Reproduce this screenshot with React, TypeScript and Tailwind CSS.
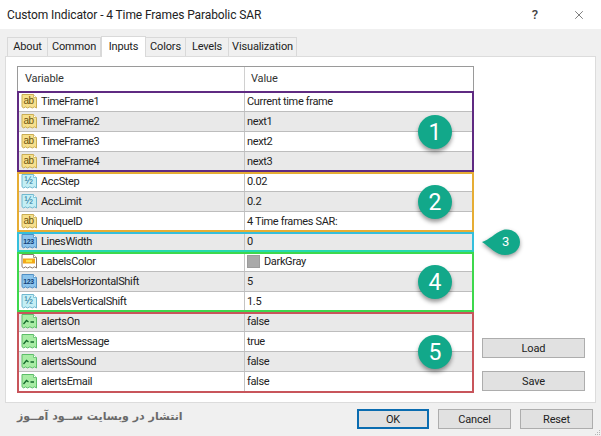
import React from 'react';
import { X } from 'lucide-react';

type IconKind = 'ab' | 'half' | 'num' | 'color' | 'bool';

interface Param {
  name: string;
  value: string;
  icon: IconKind;
}

const groups: { rows: Param[]; frame: string; badge?: string; className: string }[] = [
  {
    frame: 'border-[#5f2a82] -top-px bottom-0',
    badge: '1',
    className: 'h-[80px]',
    rows: [
      { name: 'TimeFrame1', value: 'Current time frame', icon: 'ab' },
      { name: 'TimeFrame2', value: 'next1', icon: 'ab' },
      { name: 'TimeFrame3', value: 'next2', icon: 'ab' },
      { name: 'TimeFrame4', value: 'next3', icon: 'ab' },
    ],
  },
  {
    frame: 'border-[#e6ad34] top-0 bottom-0',
    badge: '2',
    className: 'h-[60px]',
    rows: [
      { name: 'AccStep', value: '0.02', icon: 'half' },
      { name: 'AccLimit', value: '0.2', icon: 'half' },
      { name: 'UniqueID', value: '4 Time frames SAR:', icon: 'ab' },
    ],
  },
  {
    frame: 'border-[#35bfdc] border-b-[#26d8b0] top-0 bottom-0',
    className: 'h-[20px]',
    rows: [{ name: 'LinesWidth', value: '0', icon: 'num' }],
  },
  {
    frame: 'border-[#3ed84c] top-0 bottom-0',
    badge: '4',
    className: 'h-[60px]',
    rows: [
      { name: 'LabelsColor', value: 'DarkGray', icon: 'color' },
      { name: 'LabelsHorizontalShift', value: '5', icon: 'num' },
      { name: 'LabelsVerticalShift', value: '1.5', icon: 'half' },
    ],
  },
  {
    frame: 'border-[#c8555b] top-0 -bottom-px',
    badge: '5',
    className: 'h-[80px]',
    rows: [
      { name: 'alertsOn', value: 'false', icon: 'bool' },
      { name: 'alertsMessage', value: 'true', icon: 'bool' },
      { name: 'alertsSound', value: 'false', icon: 'bool' },
      { name: 'alertsEmail', value: 'false', icon: 'bool' },
    ],
  },
];

const tabs = [
  { label: 'About', w: 'w-[41px]' },
  { label: 'Common', w: 'w-[53px]' },
  { label: 'Inputs', w: 'w-[45px]' },
  { label: 'Colors', w: 'w-[40px]' },
  { label: 'Levels', w: 'w-[43px]' },
  { label: 'Visualization', w: 'w-[68px]' },
];

const iconColors: Record<IconKind, { fill: string; stroke: string; text: string }> = {
  ab: { fill: '#f7e08c', stroke: '#c9ad52', text: '#6b5410' },
  half: { fill: '#c4eef4', stroke: '#6fb9d0', text: '#1c6f96' },
  num: { fill: '#8cc4ec', stroke: '#4f8fc4', text: '#123f78' },
  color: { fill: '#ffffff', stroke: '#8a7a6a', text: '' },
  bool: { fill: '#a8eca4', stroke: '#5cbe68', text: '#14682c' },
};

function ParamIcon({ kind }: { kind: IconKind }) {
  const c = iconColors[kind];
  const label = kind === 'ab' ? 'ab' : kind === 'half' ? '½' : kind === 'num' ? '123' : '';
  return (
    <svg width="17" height="17" viewBox="0 0 17 17" className="shrink-0">
      <path
        d="M1 1.5h11.5l3 3v10.5l-2-1.2-2.2 1.2-2.4-1.2-2.3 1.2-2.3-1.2-1.5 1.2-1.8-1.2z"
        fill={c.fill}
        stroke={c.stroke}
        strokeWidth="1"
      />
      <path d="M12.5 1.5v3h3" fill="#ffffff" stroke={c.stroke} strokeWidth="0.8" />
      {kind === 'color' && <rect x="2" y="5.5" width="12" height="5" fill="#f2a818" />}
      {kind === 'color' && <rect x="5" y="6.8" width="6" height="2.4" fill="#fbe24e" />}
      {kind === 'bool' && (
        <path d="M2.5 11l3-3.5 2 1.5M9.5 9h3.5" fill="none" stroke={c.text} strokeWidth="1.3" />
      )}
      {label && (
        <text
          x="7.6"
          y="11"
          textAnchor="middle"
          fontFamily="'Liberation Sans', sans-serif"
          fontSize={kind === 'num' ? 7 : 10}
          fontWeight={kind === 'num' ? 700 : 400}
          fill={c.text}
        >
          {label}
        </text>
      )}
    </svg>
  );
}

function Badge({ n }: { n: string }) {
  return (
    <div className="absolute left-[400px] top-1/2 -translate-y-1/2 w-[34px] h-[34px] rounded-full bg-[#12a88a] text-white text-[23px] leading-none flex items-center justify-center shadow-[0_3px_4px_rgba(0,0,0,0.4)] z-10">
      {n}
    </div>
  );
}

function Row({ row, shaded }: { row: Param; shaded: boolean }) {
  return (
    <div className={`flex h-[20px] border-b border-[#bdbdbd] tracking-[-0.35px] ${shaded ? 'bg-[#e9e9e9]' : 'bg-white'}`}>
      <div className="w-[227px] pl-[3px] flex items-center gap-[3px] border-r border-[#c4c4c4] overflow-hidden">
        <ParamIcon kind={row.icon} />
        <span className="leading-none">{row.name}</span>
      </div>
      <div className="flex-1 pl-[2px] flex items-center">
        {row.icon === 'color' && <span className="w-[13px] h-[13px] bg-[#a9a9a9] border border-[#9c9c9c] mr-[3px]" />}
        <span className={row.icon === 'color' ? 'ml-[1px] leading-none' : 'leading-none'}>{row.value}</span>
      </div>
    </div>
  );
}

function WinButton({ label, className }: { label: string; className: string }) {
  return (
    <button className={`h-[20px] bg-[#e1e1e1] border border-[#adadad] flex items-center justify-center leading-none ${className}`}>
      {label}
    </button>
  );
}

export default function App() {
  let rowIndex = 0;
  return (
    <div className="relative w-[601px] h-[436px] overflow-hidden bg-[#f0f0f0] text-[11px] tracking-[-0.15px] text-[#222] font-['Roboto','Liberation_Sans',sans-serif] flex flex-col">
      <div className="h-[29px] bg-white flex items-center justify-between pl-[7px] pr-[15px] shrink-0">
        <span className="text-[12px] tracking-[-0.1px] text-[#222]">Custom Indicator - 4 Time Frames Parabolic SAR</span>
        <div className="flex items-center gap-[34px]">
          <span className="text-[13px] font-medium text-[#444]">?</span>
          <X size={14} strokeWidth={1} className="text-[#222]" />
        </div>
      </div>

      <div className="h-[27px] pl-[7px] pt-[7px] flex items-end shrink-0">
        {tabs.map((tab) =>
          tab.label === 'Inputs' ? (
            <div
              key={tab.label}
              className={`${tab.w} h-[21px] -mb-px relative z-10 bg-white border border-b-0 border-[#d9d9d9] flex items-start justify-center pt-[2px]`}
            >
              {tab.label}
            </div>
          ) : (
            <div
              key={tab.label}
              className={`${tab.w} h-[19px] bg-[#f0f0f0] border border-b-0 border-l-0 first:border-l border-[#d9d9d9] flex items-center justify-center text-[#222]`}
            >
              {tab.label}
            </div>
          ),
        )}
      </div>

      <div className="mx-[5px] w-[591px] h-[347px] bg-white border border-[#dcdcdc] pt-[9px] pl-[11px] flex shrink-0">
        <div className="w-[457px] h-[327px] border-t border-x border-[#9a9a9a] border-b-0 flex flex-col">
          <div className="h-[25px] flex bg-white shrink-0">
            <div className="w-[227px] pl-[7px] flex items-center border-r border-[#d0d0d0] text-[#333]">Variable</div>
            <div className="pl-[6px] flex items-center text-[#333]">Value</div>
          </div>
          {groups.map((group) => (
            <div key={group.frame} className={`relative shrink-0 ${group.className}`}>
              {group.rows.map((row) => {
                const shaded = rowIndex % 2 === 1;
                rowIndex += 1;
                return <Row key={row.name} row={row} shaded={shaded} />;
              })}
              <div className={`absolute -inset-x-px border-2 pointer-events-none ${group.frame}`} />
              {group.badge && <Badge n={group.badge} />}
              {!group.badge && (
                <div className="absolute left-[463px] top-[-4px] text-white z-10">
                  <div className="relative w-[42px] h-[28px]">
                    <svg width="42" height="30" viewBox="0 0 42 30" className="absolute inset-0 drop-shadow-[0_2px_2px_rgba(0,0,0,0.4)]">
                      <path d="M1 14C8 12 14 5 22 2c8-2 17 3 17 12s-8 13-15 13C15 27 9 19 1 14z" fill="#12a88a" />
                    </svg>
                    <span className="absolute left-[21px] top-[6px] text-[13px] leading-[16px]">3</span>
                  </div>
                </div>
              )}
            </div>
          ))}
        </div>
        <div className="ml-[8px] w-[103px] h-[327px] flex flex-col justify-end gap-[13px] pb-[2px]">
          <WinButton label="Load" className="w-[103px]" />
          <WinButton label="Save" className="w-[103px]" />
        </div>
      </div>

      <div className="flex-1 flex items-start justify-between pl-[17px] pr-[8px] pt-[6px]">
        <span
          dir="rtl"
          className="text-[11px] font-bold tracking-normal text-[#6a6a6a] font-['DejaVu_Sans',sans-serif]"
        >
          انتشار در وبسایت ســود آمــوز
        </span>
        <div className="flex gap-[9px]">
          <WinButton label="OK" className="w-[72px] !border-2 !border-[#0a6cb0]" />
          <WinButton label="Cancel" className="w-[73px]" />
          <WinButton label="Reset" className="w-[73px]" />
        </div>
      </div>

      <svg width="7" height="7" viewBox="0 0 7 7" className="absolute right-0 bottom-0">
        <path d="M5 1h1v1H5zM3 3h1v1H3zM5 3h1v1H5zM1 5h1v1H1zM3 5h1v1H3zM5 5h1v1H5z" fill="#b5b5b5" />
      </svg>
    </div>
  );
}
